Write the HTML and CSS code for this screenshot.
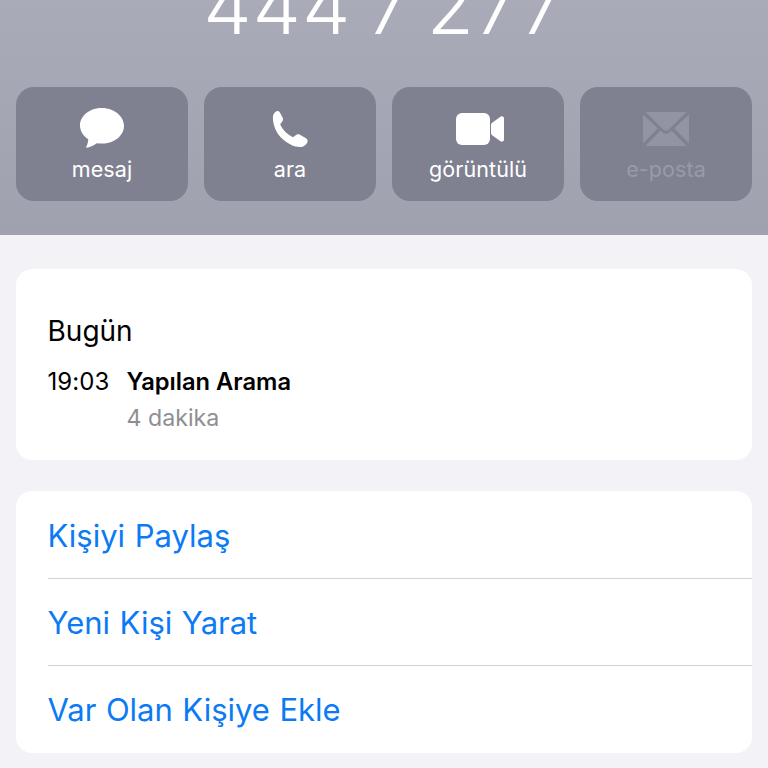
FILE: index.html
```html
<!DOCTYPE html>
<html lang="tr">
<head>
<meta charset="utf-8">
<title>Kişi</title>
<link rel="stylesheet" href="styles.css">
</head>
<body>
<header class="head">
  <div class="number-clip"><div class="number">444 7 277</div></div>
  <div class="actions">
    <div class="action">
      <svg class="icon" width="46" height="42" viewBox="0 0 46 42"><path fill="#fff" d="M23 0C10.800 0 1 7.800 1 17.500c0 5.600 3.300 10.600 8.300 13.700-.2 2.800-1 5.800-2 7.400-.4.700.1 1.300.8 1.100 3.400-.6 7-2.300 9.600-4.500 1.700.3 3.500.3 5.300.3 12.200 0 22-7.800 22-17.500S35.200 0 23 0z"/></svg>
      <span>mesaj</span>
    </div>
    <div class="action">
      <svg class="icon" width="46" height="42" viewBox="0 0 46 42"><path fill="#fff" d="M6 8C6.300 5.500 8.500 3.200 10.500 3 11.500 2.900 12.300 3.500 12.900 4.500L15.800 10C16.400 11.200 16.200 12.400 15.300 13.400L13.800 15.200C13.200 16 13.300 16.800 13.700 17.600 15 20 16.500 22.200 18.400 24.100 20.300 26 22.500 27.500 25 28.800 25.800 29.200 26.500 29.200 27.200 28.600L29 27C30 26.100 31.300 26 32.500 26.600L38.600 30C40 30.800 40.800 32 40.600 33.200 40.300 35.500 37.500 39 33 39 26 39 18 34 13 28.500 8 23 5.400 14 6 8Z"/></svg>
      <span>ara</span>
    </div>
    <div class="action">
      <svg class="icon" width="52" height="42" viewBox="0 0 52 42"><rect fill="#fff" x="4" y="5" width="34" height="32" rx="6"/><path fill="#fff" d="M40.500 14.500l8-5.800c1.500-1 3.500 0 3.500 1.800v21c0 1.800-2 2.800-3.500 1.800l-8-5.800c-1-.7-1.500-1.700-1.500-2.800v-7.400c0-1.100.5-2.100 1.500-2.800z"/></svg>
      <span>görüntülü</span>
    </div>
    <div class="action off">
      <svg class="icon" width="48" height="42" viewBox="0 0 48 42"><path fill="#9294a4" d="M1 6.500v29l14.700-15.200zM47 6.500v29L32.300 20.300zM3.500 4h41L26.500 21.800c-1.500 1.400-3.500 1.400-5 0zM3.500 38l14.900-15.600 2 1.900c2.100 2 5.100 2 7.200 0l2-1.900L44.500 38z"/></svg>
      <span>e-posta</span>
    </div>
  </div>
</header>
<main class="content">
  <section class="card history">
    <div class="day">Bugün</div>
    <div class="call">
      <div class="time">19:03</div>
      <div class="detail">
        <div class="kind">Yapılan Arama</div>
        <div class="length">4 dakika</div>
      </div>
    </div>
  </section>
  <section class="card links">
    <div class="link">Kişiyi Paylaş</div>
    <div class="link">Yeni Kişi Yarat</div>
    <div class="link">Var Olan Kişiye Ekle</div>
  </section>
</main>
</body>
</html>
```
FILE: styles.css
```css
* { box-sizing: border-box; }
html, body { margin: 0; height: 768px; overflow: hidden; }
body { background: #f2f2f7; font-family: Inter, "Noto Sans", sans-serif; color: #000; }
.head { height: 235px; padding: 0 16px; background: linear-gradient(#a9abb8, #9fa1ae); }
.number-clip { height: 87px; overflow: hidden; display: flex; align-items: flex-start; justify-content: center; }
.number { margin-top: -36px; font-size: 77px; letter-spacing: 1px; word-spacing: -7px; line-height: 84px; font-weight: 300; color: #fff; white-space: nowrap; }
.actions { display: grid; grid-template-columns: repeat(4, 1fr); gap: 16px; }
.action { height: 114px; border-radius: 18px; background: #7f8191; color: #fff; display: flex; flex-direction: column; align-items: center; padding-top: 21px; font-size: 21.5px; line-height: 24px; }
.icon { display: block; flex: none; }
.action span { margin-top: 7px; letter-spacing: .1px; }
.off { color: #979aa9; }
.content { padding: 34px 16px 0; display: flex; flex-direction: column; gap: 31px; }
.card { background: #fff; border-radius: 16px; }
.history { height: 191px; padding: 46px 32px 0 31.5px; }
.day { font-size: 28px; line-height: 32px; }
.call { display: flex; margin-top: 21px; }
.time { width: 79px; font-size: 24px; line-height: 28px; letter-spacing: .1px; }
.kind { font-size: 23.7px; line-height: 28px; font-weight: 600; }
.length { margin-top: 8px; font-size: 23.2px; line-height: 28px; color: #8e8e93; }
.links { height: 262px; padding: 1px 0 0 31.5px; }
.link { height: 87px; display: flex; align-items: center; font-size: 31px; word-spacing: .8px; color: #0a7bf5; border-bottom: 1px solid #d2d2d6; }
.link:last-child { border-bottom: 0; }
```
